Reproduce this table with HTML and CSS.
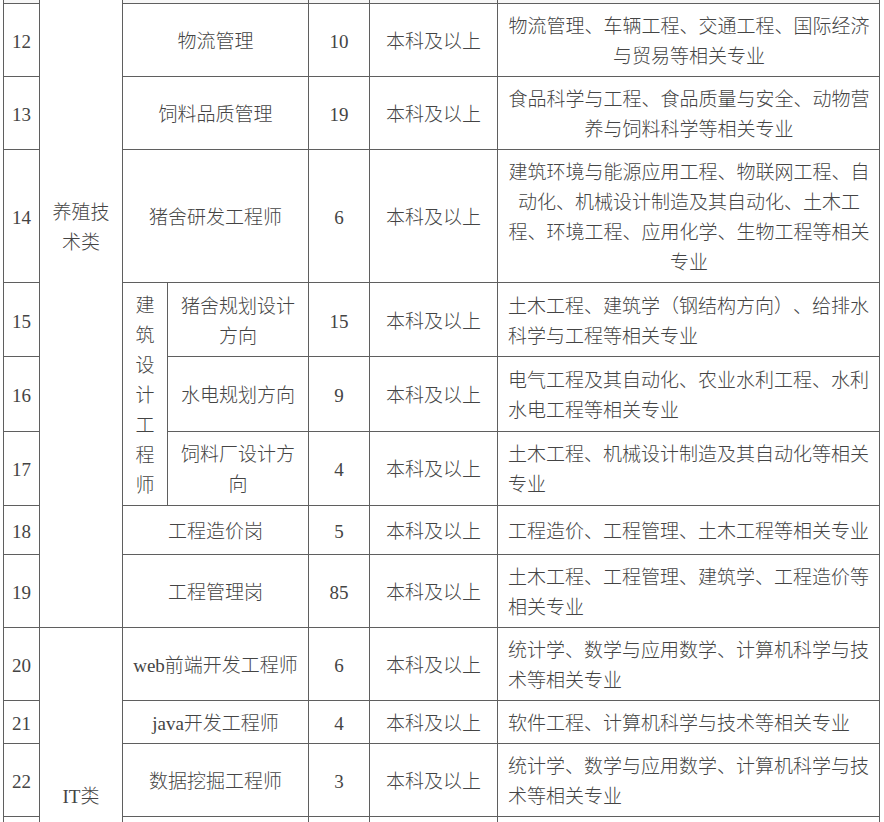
FILE: index.html
```html
<!DOCTYPE html>
<html lang="zh-CN">
<head>
<meta charset="utf-8">
<title>招聘岗位</title>
<link rel="stylesheet" href="styles.css">
</head>
<body>
<div class="page">
<table class="jobs">
  <colgroup>
    <col class="c-no">
    <col class="c-cat">
    <col class="c-sub">
    <col class="c-pos">
    <col class="c-num">
    <col class="c-edu">
    <col class="c-desc">
  </colgroup>
  <tbody>
    <tr class="edge-top">
      <td></td>
      <td class="cat cat-farm" rowspan="9">养殖技术类</td>
      <td colspan="2"></td>
      <td></td>
      <td></td>
      <td></td>
    </tr>
    <tr>
      <td>12</td>
      <td colspan="2">物流管理</td>
      <td>10</td>
      <td>本科及以上</td>
      <td class="desc center">物流管理、车辆工程、交通工程、国际经济与贸易等相关专业</td>
    </tr>
    <tr>
      <td>13</td>
      <td colspan="2">饲料品质管理</td>
      <td>19</td>
      <td>本科及以上</td>
      <td class="desc center">食品科学与工程、食品质量与安全、动物营养与饲料科学等相关专业</td>
    </tr>
    <tr>
      <td>14</td>
      <td colspan="2">猪舍研发工程师</td>
      <td>6</td>
      <td>本科及以上</td>
      <td class="desc center">建筑环境与能源应用工程、物联网工程、自动化、机械设计制造及其自动化、土木工程、环境工程、应用化学、生物工程等相关专业</td>
    </tr>
    <tr>
      <td>15</td>
      <td class="sub" rowspan="3">建筑设计工程师</td>
      <td>猪舍规划设计方向</td>
      <td>15</td>
      <td>本科及以上</td>
      <td class="desc">土木工程、建筑学（钢结构方向）、给排水科学与工程等相关专业</td>
    </tr>
    <tr>
      <td>16</td>
      <td>水电规划方向</td>
      <td>9</td>
      <td>本科及以上</td>
      <td class="desc">电气工程及其自动化、农业水利工程、水利水电工程等相关专业</td>
    </tr>
    <tr>
      <td>17</td>
      <td>饲料厂设计方向</td>
      <td>4</td>
      <td>本科及以上</td>
      <td class="desc">土木工程、机械设计制造及其自动化等相关专业</td>
    </tr>
    <tr class="row-mid">
      <td>18</td>
      <td colspan="2">工程造价岗</td>
      <td>5</td>
      <td>本科及以上</td>
      <td class="desc">工程造价、工程管理、土木工程等相关专业</td>
    </tr>
    <tr>
      <td>19</td>
      <td colspan="2">工程管理岗</td>
      <td>85</td>
      <td>本科及以上</td>
      <td class="desc">土木工程、工程管理、建筑学、工程造价等相关专业</td>
    </tr>
    <tr>
      <td>20</td>
      <td class="cat cat-it" rowspan="4">IT类</td>
      <td colspan="2">web前端开发工程师</td>
      <td>6</td>
      <td>本科及以上</td>
      <td class="desc">统计学、数学与应用数学、计算机科学与技术等相关专业</td>
    </tr>
    <tr>
      <td>21</td>
      <td colspan="2">java开发工程师</td>
      <td>4</td>
      <td>本科及以上</td>
      <td class="desc">软件工程、计算机科学与技术等相关专业</td>
    </tr>
    <tr>
      <td>22</td>
      <td colspan="2">数据挖掘工程师</td>
      <td>3</td>
      <td>本科及以上</td>
      <td class="desc">统计学、数学与应用数学、计算机科学与技术等相关专业</td>
    </tr>
    <tr class="edge-bottom">
      <td></td>
      <td colspan="2"></td>
      <td></td>
      <td></td>
      <td></td>
    </tr>
  </tbody>
</table>
</div>
</body>
</html>
```

FILE: styles.css
```css
html, body {
  margin: 0;
  padding: 0;
  background: #ffffff;
}

.page {
  padding-left: 3px;
}

.jobs {
  border-collapse: collapse;
  table-layout: fixed;
  width: 876px;
  font-family: "Liberation Serif", "Noto Sans CJK SC", serif;
  font-size: 19px;
  font-weight: 300;
  line-height: 30px;
  color: #444444;
  text-spacing-trim: space-all;
}

.c-no { width: 36px; }
.c-cat { width: 83px; }
.c-sub { width: 45px; }
.c-pos { width: 141px; }
.c-num { width: 61px; }
.c-edu { width: 128px; }
.c-desc { width: 382px; }

.jobs td {
  border: 1px solid #5f5f5f;
  padding: 8px 5px 4px;
  text-align: center;
  vertical-align: middle;
  word-break: normal;
}

.jobs .desc {
  text-align: left;
  padding: 8px 9px 4px 10px;
}

.jobs .desc.center {
  text-align: center;
}

.edge-top td {
  border-top: none;
  height: 3px;
  padding: 0;
  background: #f7f7f7;
}

.edge-bottom td {
  border-bottom: none;
  height: 30px;
  padding: 0;
}

.jobs .cat {
  vertical-align: top;
  padding-left: 8px;
  padding-right: 8px;
  background: #ffffff;
}

.jobs .cat-farm {
  padding-top: 198px;
}

.jobs .cat-it {
  padding-top: 154px;
}

.row-mid td {
  height: 36px;
}
```
